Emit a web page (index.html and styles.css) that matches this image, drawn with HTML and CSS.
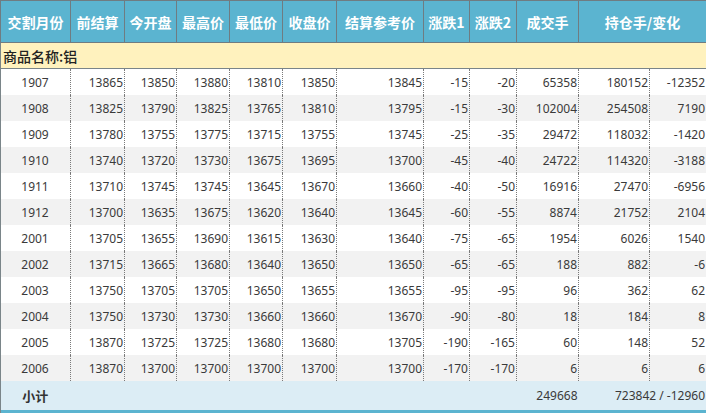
FILE: index.html
```html
<!DOCTYPE html>
<html lang="zh">
<head>
<meta charset="utf-8">
<link rel="stylesheet" href="styles.css">
</head>
<body>
<table class="quote">
  <colgroup>
    <col style="width:70px"><col style="width:54px"><col style="width:52px"><col style="width:53px"><col style="width:53px"><col style="width:54px"><col style="width:87px"><col style="width:46px"><col style="width:47px"><col style="width:62px"><col style="width:71px"><col style="width:57px">
  </colgroup>
  <thead>
    <tr class="head">
      <th>交割月份</th><th>前结算</th><th>今开盘</th><th>最高价</th><th>最低价</th><th>收盘价</th><th>结算参考价</th><th>涨跌1</th><th>涨跌2</th><th>成交手</th><th colspan="2">持仓手/变化</th>
    </tr>
  </thead>
  <tbody>
    <tr class="cat"><td colspan="12">商品名称:铝</td></tr>
    <tr><td>1907</td><td>13865</td><td>13850</td><td>13880</td><td>13810</td><td>13850</td><td>13845</td><td>-15</td><td>-20</td><td>65358</td><td>180152</td><td>-12352</td></tr>
    <tr><td>1908</td><td>13825</td><td>13790</td><td>13825</td><td>13765</td><td>13810</td><td>13795</td><td>-15</td><td>-30</td><td>102004</td><td>254508</td><td>7190</td></tr>
    <tr><td>1909</td><td>13780</td><td>13755</td><td>13775</td><td>13715</td><td>13755</td><td>13745</td><td>-25</td><td>-35</td><td>29472</td><td>118032</td><td>-1420</td></tr>
    <tr><td>1910</td><td>13740</td><td>13720</td><td>13730</td><td>13675</td><td>13695</td><td>13700</td><td>-45</td><td>-40</td><td>24722</td><td>114320</td><td>-3188</td></tr>
    <tr><td>1911</td><td>13710</td><td>13745</td><td>13745</td><td>13645</td><td>13670</td><td>13660</td><td>-40</td><td>-50</td><td>16916</td><td>27470</td><td>-6956</td></tr>
    <tr><td>1912</td><td>13700</td><td>13635</td><td>13675</td><td>13620</td><td>13640</td><td>13645</td><td>-60</td><td>-55</td><td>8874</td><td>21752</td><td>2104</td></tr>
    <tr><td>2001</td><td>13705</td><td>13655</td><td>13690</td><td>13615</td><td>13630</td><td>13640</td><td>-75</td><td>-65</td><td>1954</td><td>6026</td><td>1540</td></tr>
    <tr><td>2002</td><td>13715</td><td>13665</td><td>13680</td><td>13640</td><td>13650</td><td>13650</td><td>-65</td><td>-65</td><td>188</td><td>882</td><td>-6</td></tr>
    <tr><td>2003</td><td>13750</td><td>13705</td><td>13705</td><td>13650</td><td>13655</td><td>13655</td><td>-95</td><td>-95</td><td>96</td><td>362</td><td>62</td></tr>
    <tr><td>2004</td><td>13750</td><td>13730</td><td>13730</td><td>13660</td><td>13660</td><td>13670</td><td>-90</td><td>-80</td><td>18</td><td>184</td><td>8</td></tr>
    <tr><td>2005</td><td>13870</td><td>13725</td><td>13725</td><td>13680</td><td>13680</td><td>13705</td><td>-190</td><td>-165</td><td>60</td><td>148</td><td>52</td></tr>
    <tr><td>2006</td><td>13870</td><td>13700</td><td>13700</td><td>13700</td><td>13700</td><td>13700</td><td>-170</td><td>-170</td><td>6</td><td>6</td><td>6</td></tr>
  </tbody>
  <tfoot>
    <tr class="total">
      <td class="label">小计</td><td></td><td></td><td></td><td></td><td></td><td></td><td></td><td></td><td>249668</td><td colspan="2">723842 / -12960</td>
    </tr>
  </tfoot>
</table>
<div class="next-head"></div>
</body>
</html>
```

FILE: styles.css
```css
html, body {
  margin: 0;
  padding: 0;
  background: #ffffff;
}

.quote {
  width: 706px;
  table-layout: fixed;
  border-collapse: collapse;
  font-family: "Segoe UI", "Noto Sans", "Noto Sans CJK SC", sans-serif;
  font-size: 12px;
  color: #3a3a3a;
}

.quote th {
  background: #5bb4d0;
  color: #ffffff;
  font-family: "Noto Sans CJK SC", sans-serif;
  font-weight: 700;
  font-size: 14px;
  height: 41px;
  padding: 0;
  border: 1px solid #6f7c82;
  text-align: center;
  white-space: nowrap;
}

.quote td {
  height: 26px;
  padding: 0 1px 0 0;
  text-align: right;
  border-left: 1px dotted #7a7a7a;
  border-right: 1px dotted #7a7a7a;
  white-space: nowrap;
}

.quote td:first-child {
  text-align: center;
  border-left: 1px solid #7a8589;
}

.quote td:last-child {
  border-right: 1px solid #7a8589;
}

.quote tbody tr:nth-child(odd) td {
  background: #f2f2f2;
}

.quote tbody tr:nth-child(even) td {
  background: #ffffff;
}

.quote tbody tr.cat td {
  background: #fff2be;
  text-align: left;
  padding-left: 2px;
  font-family: "Noto Sans CJK SC", sans-serif;
  font-weight: 500;
  font-size: 14px;
  color: #222222;
  border: 1px solid #7a8589;
  height: 25px;
}

.quote tfoot td {
  background: #dcedf5;
  height: 29px;
  border-left: none;
  border-right: none;
  font-size: 12px;
  color: #3a3a3a;
}

.quote tfoot td:first-child {
  border-left: 1px solid #7a8589;
}

.quote tfoot td:last-child {
  border-right: 1px solid #7a8589;
}

.quote tfoot td.label {
  font-family: "Noto Sans CJK SC", sans-serif;
  font-weight: 700;
  font-size: 13px;
  color: #333333;
}

.next-head {
  height: 20px;
  background: #5bb4d0;
  border-left: 1px solid #7a8589;
}
```
